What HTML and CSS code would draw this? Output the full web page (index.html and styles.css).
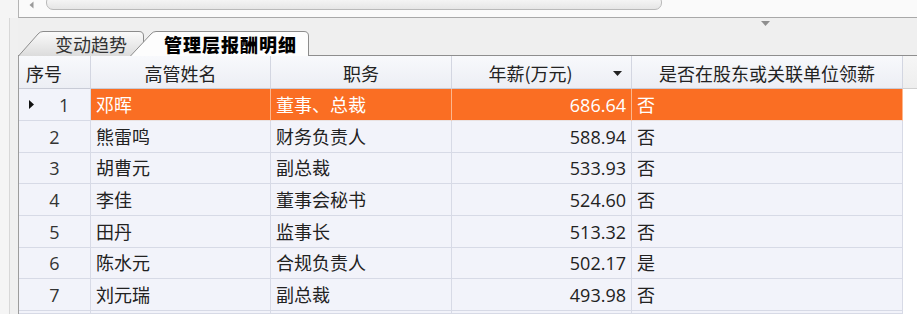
FILE: index.html
```html
<!DOCTYPE html>
<html lang="zh-CN">
<head>
<meta charset="utf-8">
<title>管理层报酬明细</title>
<link rel="stylesheet" href="styles.css">
</head>
<body>
<div class="topbar">
  <svg class="sb-arrow" width="5" height="8" viewBox="0 0 5 8"><path d="M4.5 0.5 L0.5 4 L4.5 7.5 Z" fill="#9a9a9a"/></svg>
  <div class="sb-thumb"></div>
</div>
<div class="panel">
  <div class="tabbar">
    <div class="tab tab-1">
      <svg class="tab-bg" width="127" height="25" viewBox="0 0 127 25">
        <defs>
          <linearGradient id="g1" x1="0" y1="0" x2="0" y2="1">
            <stop offset="0" stop-color="#fbfbfb"/>
            <stop offset="1" stop-color="#dcdcdc"/>
          </linearGradient>
        </defs>
        <path d="M0.5 25 L20 3 Q22 0.5 25 0.5 L121 0.5 Q125.5 0.5 125.5 5 L125.5 25" fill="url(#g1)" stroke="#8c8c8c"/>
      </svg>
      <span class="tab-label">变动趋势</span>
    </div>
    <div class="tab tab-2">
      <svg class="tab-bg" width="180" height="25" viewBox="0 0 180 25">
        <path d="M0.5 25 L21 3 Q23 0.5 26 0.5 L174 0.5 Q178.5 0.5 178.5 5 L178.5 25" fill="#fdfdfd" stroke="#8c8c8c"/>
      </svg>
      <span class="tab-label tab-label-active">管理层报酬明细</span>
    </div>
    <svg class="menu-arrow" width="9" height="5" viewBox="0 0 9 5"><path d="M0 0 L9 0 L4.5 5 Z" fill="#8e8e8e"/></svg>
  </div>
  <div class="grid">
    <div class="hd hd-left">序号</div>
    <div class="hd">高管姓名</div>
    <div class="hd">职务</div>
    <div class="hd hd-sort">年薪(万元)<svg class="sort-arrow" width="9" height="5" viewBox="0 0 9 5"><path d="M0 0 L9 0 L4.5 5 Z" fill="#222"/></svg></div>
    <div class="hd">是否在股东或关联单位领薪</div>
    <div class="hd hd-fill"></div>

    <div class="c num sel-ind"><svg class="row-arrow" width="5" height="9" viewBox="0 0 5 9"><path d="M0 0 L5 4.5 L0 9 Z" fill="#111"/></svg><span>1</span></div>
    <div class="c sel">邓晖</div>
    <div class="c sel">董事、总裁</div>
    <div class="c sel r">686.64</div>
    <div class="c sel">否</div>
    <div class="fill"></div>

    <div class="c num">2</div>
    <div class="c">熊雷鸣</div>
    <div class="c">财务负责人</div>
    <div class="c r">588.94</div>
    <div class="c">否</div>
    <div class="fill"></div>

    <div class="c num">3</div>
    <div class="c">胡曹元</div>
    <div class="c">副总裁</div>
    <div class="c r">533.93</div>
    <div class="c">否</div>
    <div class="fill"></div>

    <div class="c num">4</div>
    <div class="c">李佳</div>
    <div class="c">董事会秘书</div>
    <div class="c r">524.60</div>
    <div class="c">否</div>
    <div class="fill"></div>

    <div class="c num">5</div>
    <div class="c">田丹</div>
    <div class="c">监事长</div>
    <div class="c r">513.32</div>
    <div class="c">否</div>
    <div class="fill"></div>

    <div class="c num">6</div>
    <div class="c">陈水元</div>
    <div class="c">合规负责人</div>
    <div class="c r">502.17</div>
    <div class="c">是</div>
    <div class="fill"></div>

    <div class="c num">7</div>
    <div class="c">刘元瑞</div>
    <div class="c">副总裁</div>
    <div class="c r">493.98</div>
    <div class="c">否</div>
    <div class="fill"></div>

    <div class="c num"></div>
    <div class="c"></div>
    <div class="c"></div>
    <div class="c r"></div>
    <div class="c"></div>
    <div class="fill"></div>
  </div>
</div>
</body>
</html>
```
FILE: styles.css
```css
* { box-sizing: border-box; }
html, body { margin: 0; padding: 0; }
body {
  width: 917px;
  height: 314px;
  overflow: hidden;
  background: #f5f5f5;
  font-family: "Open Sans", "Noto Sans CJK SC", sans-serif;
  font-size: 18px;
  color: #222;
}

.topbar {
  margin-left: 18px;
  height: 18px;
  border-left: 1px solid #b4b4b4;
  border-bottom: 1px solid #a8a8a8;
  background: #fafafa;
  display: flex;
  align-items: flex-start;
  padding-left: 10px;
  overflow: hidden;
}
.sb-arrow { margin-top: 1px; flex: none; }
.sb-thumb {
  margin-left: 12px;
  margin-top: -5px;
  width: 616px;
  height: 15px;
  border: 1px solid #b9b9b9;
  border-radius: 7px;
  background: linear-gradient(#fafafa, #e6e6e6);
  flex: none;
}

.panel {
  margin-left: 9px;
  border-left: 1px solid #d8d8d8;
  padding-left: 8px;
  background: #f0f0f0;
}

.tabbar {
  height: 38px;
  border-bottom: 1px solid #8e8e8e;
  display: flex;
  align-items: flex-end;
  background: #efefef;
}
.tab {
  position: relative;
  height: 24px;
  display: flex;
  align-items: center;
  flex: none;
}
.tab-bg { position: absolute; left: 0; top: 0; }
.tab-1 { width: 127px; padding-left: 37px; z-index: 1; }
.tab-2 { width: 180px; margin-left: -15px; padding-left: 34px; z-index: 2; }
.tab-label {
  position: relative;
  font-family: "Noto Sans CJK SC", sans-serif;
  font-size: 18px;
  line-height: 24px;
  color: #333;
  white-space: nowrap;
  margin-top: 2px;
}
.tab-label-active { font-weight: 900; color: #000; letter-spacing: 1px; }
.menu-arrow {
  align-self: flex-start;
  margin-top: 3px;
  margin-left: 451px;
  flex: none;
}

.grid {
  display: grid;
  grid-template-columns: 72px 180px 181px 180px 271px 1fr;
  grid-template-rows: 33px 32px 32px 31px 32px 32px 31px 32px 3px;
  border-left: 1px solid #9c9c9c;
  margin-left: 0;
}
.hd {
  background: linear-gradient(#f8f9fc, #eceef4);
  border-right: 1px solid #d3d6e1;
  border-bottom: 1px solid #c8cbd6;
  display: flex;
  align-items: center;
  justify-content: center;
  font-family: "Noto Sans CJK SC", sans-serif;
  line-height: 20px;
  color: #222;
  white-space: nowrap;
  padding-top: 1px;
}
.hd-left { justify-content: flex-start; padding-left: 7px; }
.hd-sort { position: relative; padding-right: 22px; }
.sort-arrow { position: absolute; right: 9px; top: 15px; }
.hd-fill { background: linear-gradient(#f6f6f6, #eeeeee); border-right: none; border-bottom: 1px solid #d0d0d0; }

.c {
  background: #f2f3fa;
  border-right: 1px solid #d7dae6;
  border-bottom: 1px solid #d7dae6;
  display: flex;
  align-items: center;
  padding-left: 5px;
  padding-right: 5px;
  line-height: 20px;
  white-space: nowrap;
  color: #222;
  overflow: hidden;
}
.c.r { justify-content: flex-end; }
.c.num { justify-content: center; color: #333; padding-left: 0; padding-right: 0; }
.c.sel-ind { justify-content: flex-start; padding-left: 10px; }
.row-arrow { flex: none; }
.sel-ind span { margin-left: 25px; }
.c.sel {
  background: #fa6e23;
  color: #fff;
  border-right-color: #fcb68d;
  border-bottom-color: #e9e2e2;
}
.fill { background: #ffffff; }
```
